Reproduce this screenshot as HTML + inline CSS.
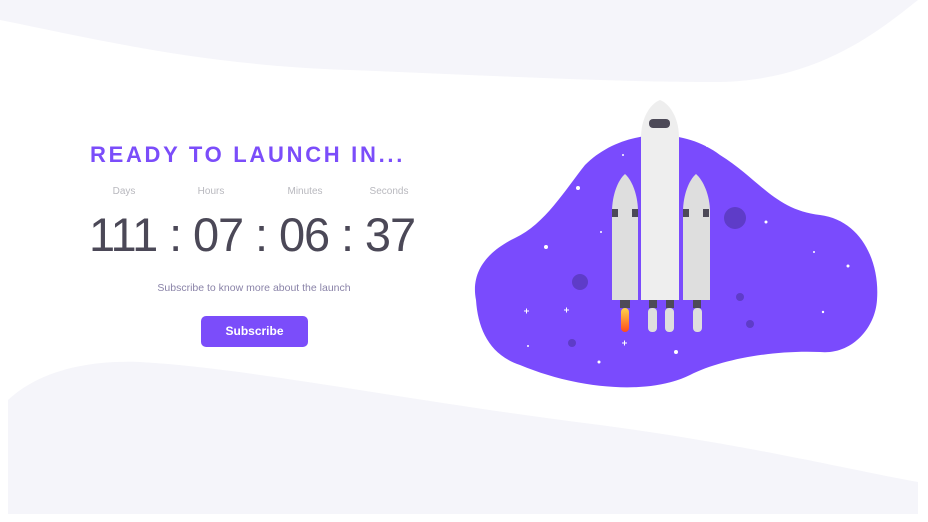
<!DOCTYPE html><html><head><style>
body{margin:0;width:928px;height:522px;background:#fff;overflow:hidden;position:relative;font-family:"Liberation Sans",sans-serif}
svg.bg{position:absolute;left:0;top:0}
.t{position:absolute;left:90px;top:142px;font-size:22px;font-weight:bold;letter-spacing:2.7px;color:#7b4dfa}
.l{position:absolute;top:186px;font-size:10px;color:#b8b8be;width:80px;text-align:center}
.n{position:absolute;left:89px;top:207px;font-size:47px;color:#4b4857;white-space:nowrap;letter-spacing:-1.1px}
.s{position:absolute;left:90px;top:282px;width:328px;text-align:center;font-size:10.5px;color:#8a83a8}
.b{position:absolute;left:201px;top:316px;width:107px;height:31px;border-radius:5px;background:#7b4dfa;color:#fff;font-size:12px;font-weight:bold;text-align:center;line-height:31px}
</style></head><body>
<svg class="bg" width="928" height="522">
<path d="M0 0H918C880 30 820 80 720 82C600 82 480 75 350 70C200 65 100 40 0 20Z" fill="#f5f5fa"/>
<path d="M8 400C40 370 90 360 140 362C250 368 400 400 600 425C750 445 850 470 918 482V514H8Z" fill="#f5f5fa"/>
<path d="M476 300C470 270 490 250 515 238C545 224 565 190 585 165C620 130 680 125 720 155C760 180 775 210 820 215C860 220 880 260 877 300C875 330 850 355 820 352C770 350 720 360 690 375C650 395 580 390 520 365C490 355 478 330 476 300Z" fill="#7a4bfd"/>
<g fill="#5e3cc8"><circle cx="735" cy="218" r="11"/><circle cx="580" cy="282" r="8"/><circle cx="740" cy="297" r="4"/><circle cx="750" cy="324" r="4"/><circle cx="572" cy="343" r="4"/></g>
<g fill="#fff"><circle cx="578" cy="188" r="2"/><circle cx="546" cy="247" r="2"/><circle cx="766" cy="222" r="1.5"/><circle cx="848" cy="266" r="1.5"/><circle cx="676" cy="352" r="2"/><circle cx="599" cy="362" r="1.5"/><circle cx="823" cy="312" r="1.2"/><circle cx="814" cy="252" r="1"/><circle cx="528" cy="346" r="1"/><circle cx="601" cy="232" r="1"/><circle cx="623" cy="155" r="1"/><circle cx="707" cy="146" r="1"/></g>
<g stroke="#fff" stroke-width="1"><path d="M524 311h5M526.5 308.5v5M564 310h5M566.5 307.5v5M622 343h5M624.5 340.5v5"/></g>
<path d="M641 300V138C641 118 650 104 660 100C670 104 679 118 679 138V300Z" fill="#eee"/>
<rect x="649" y="119" width="21" height="9" rx="4" fill="#4d4a58"/>
<path d="M612 300V212C612 195 618 180 625 174C632 180 638 195 638 212V300Z" fill="#dedede"/>
<path d="M683 300V212C683 195 689 180 696 174C703 180 710 195 710 212V300Z" fill="#dedede"/>
<g fill="#4d4a58"><rect x="612" y="209" width="6" height="8"/><rect x="632" y="209" width="6" height="8"/><rect x="683" y="209" width="6" height="8"/><rect x="703" y="209" width="6" height="8"/><rect x="620" y="300" width="10" height="8"/><rect x="649" y="300" width="8" height="8"/><rect x="666" y="300" width="8" height="8"/><rect x="693" y="300" width="8" height="8"/></g>
<defs><linearGradient id="f" x1="0" y1="0" x2="0" y2="1"><stop offset="0" stop-color="#ffd54a"/><stop offset="1" stop-color="#ff4a1c"/></linearGradient></defs>
<rect x="621" y="308" width="8" height="24" rx="4" fill="url(#f)"/>
<g fill="#dedede"><rect x="648" y="308" width="9" height="24" rx="4"/><rect x="665" y="308" width="9" height="24" rx="4"/><rect x="693" y="308" width="9" height="24" rx="4"/></g>
</svg>
<div class="t">READY TO LAUNCH IN...</div>
<div class="l" style="left:84px">Days</div><div class="l" style="left:171px">Hours</div><div class="l" style="left:265px">Minutes</div><div class="l" style="left:349px">Seconds</div>
<div class="n">111 : 07 : 06 : 37</div>
<div class="s">Subscribe to know more about the launch</div>
<div class="b">Subscribe</div>
</body></html>
